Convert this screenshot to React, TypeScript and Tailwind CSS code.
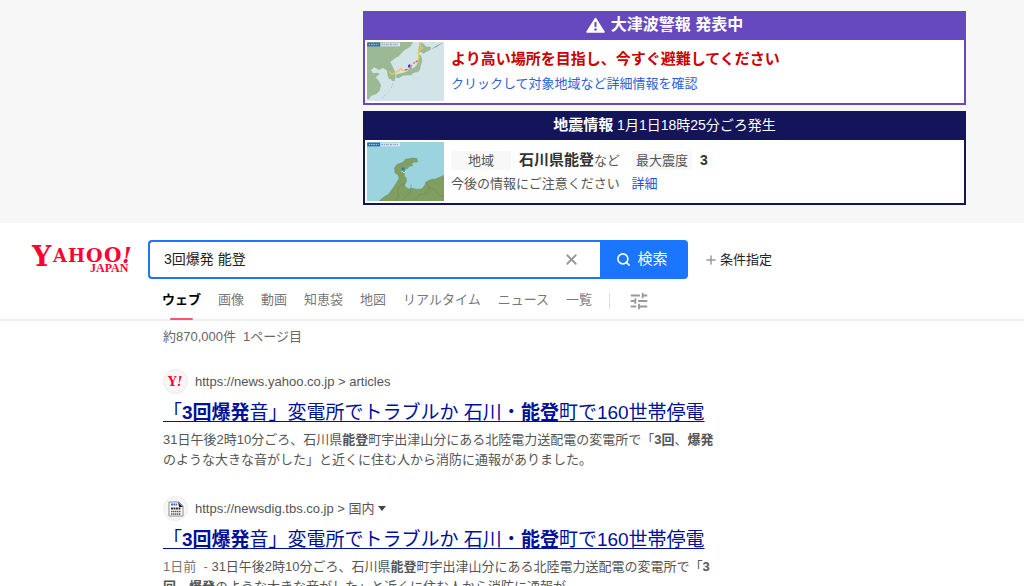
import type { ReactNode } from 'react';
import { MdTune } from 'react-icons/md';
import { Plus, Search, X } from 'lucide-react';
import clsx from 'clsx';

const tabs = ['ウェブ', '画像', '動画', '知恵袋', '地図', 'リアルタイム', 'ニュース', '一覧'];

const YahooLogo = () => (
  <a
    href="#top"
    aria-label="YAHOO! JAPAN"
    className="w-[148px] shrink-0 self-start pl-[31px]"
  >
    <svg width="104" height="36" viewBox="0 0 104 36" fill="#ff0033">
      <g fontFamily="DejaVu Serif, serif" fontWeight="700">
        <text x="1" y="26" fontSize="27">Y</text>
        <text x="22" y="22" fontSize="18">A</text>
        <text x="37" y="22" fontSize="18">H</text>
        <text x="55" y="22" fontSize="19">O</text>
        <text x="73" y="22" fontSize="20">O</text>
        <text x="91" y="23" fontSize="22" fontStyle="italic">!</text>
      </g>
      <text
        x="59"
        y="32"
        fontSize="12"
        fontWeight="700"
        fontFamily="Liberation Serif, serif"
      >
        JAPAN
      </text>
    </svg>
  </a>
);

const MapLabel = () => (
  <g>
    <rect x="1" y="2" width="39" height="11" fill="#1c62a4" />
    <rect x="40" y="2" width="59" height="11" fill="#dfe8f6" />
    <path d="M5 7.500h30" stroke="#9fc0dc" strokeWidth="4" strokeDasharray="5 2" />
    <path d="M43 7.500h52" stroke="#8ea3cf" strokeWidth="4" strokeDasharray="6 2 3 2" />
  </g>
);

const JapanMap = () => (
  <svg
    viewBox="0 0 231 177"
    preserveAspectRatio="none"
    className="h-[59px] w-[77px] shrink-0"
  >
    <rect width="231" height="177" fill="#d2e4e7" />
    <g fill="#9bb995">
      <path d="M0 0h138l-8 14-20 12-14 16-14 8-12 10 6 12 8 16 2 14-8 8-12 1-5-14-2-12-11-7-12 6-14-8-10 8 6 10 14-2 6 4-12 10 10 12 6 12-4 16-10 10-16 6-6 8H0z" />
      <path d="M158 0l10 4 10 10 14 0-2 10-12 5-8 6-8-6-6 4-2-10z" />
      <path d="M153 38l9 2 4 16-5 16-2 12-6 6-13 2-8 8-12 0-16 2-17 1 2-6 18-4 14-5 8-12 4-4 2 8 12-7 6-14z" />
      <path d="M72 95l10 2 4 8-4 13-8-2-6-14zM88 101l13-3 4 5-9 6-8-2z" />
      <path d="M0 138l8 2 2 16-4 16-6-4z" />
    </g>
    <g fill="none" strokeWidth="4" strokeLinejoin="round">
      <path d="M163 4l-4 10 8 4-8 5-6 8 3 10-3 14-3 6" stroke="#eec952" />
      <path d="M66 88l6 7 6 2 8-6 10-5 5-7 4 5 12 2" stroke="#eec952" />
      <path d="M114 84l8-2M144 62l-5 2M151 56l-5 4" stroke="#e2604f" />
      <path d="M134 68l-4 9" stroke="#e98792" />
    </g>
    <path d="M123 70l5-4 3 5-4 7-4-2z" fill="#6a32c8" />
    <path
      d="M78 124l-5 14M67 148l-6 6M56 158l-12 12M194 21l16-8 18-12"
      stroke="#abc5ae"
      strokeWidth="3"
      strokeDasharray="5 5"
    />
    <MapLabel />
  </svg>
);

const NotoMap = () => (
  <svg
    viewBox="0 0 231 177"
    preserveAspectRatio="none"
    className="h-[59px] w-[77px] shrink-0"
  >
    <rect width="231" height="177" fill="#9bd3df" />
    <path
      d="M36 177l14-12 14-8 12-16 12-18 8-14-3-10-9-6-2-14 8-12 18-6 7-9 20-4 15 1 2 11-11 1-7 5 3 6-10 1-4 6-8 2-1 11-2 9 6 8 1 10-6 5 2 10 9 6 14-1 11 3 16-2 9-12 2-8 16-8 13-1 20-9 18-7v95z"
      fill="#7f9e5f"
      stroke="#6e8d67"
    />
    <g fill="none" stroke="#718e57" strokeWidth="2">
      <path d="M117 123l-15 5-10 14 4 20-12 15M133 128l-3 22-24 24" />
      <path d="M178 120l8 17 16 5 12 16 17 6M186 137l-8 18-20 3-14 18" />
    </g>
    <circle cx="108" cy="81" r="5" fill="#2779e2" />
    <path d="M103 88h4M109 92h5M114 88h3" stroke="#cfe7ea" strokeWidth="4" />
    <MapLabel />
  </svg>
);

const WarningIcon = () => (
  <svg width="19" height="16" viewBox="0 0 19 16">
    <path
      d="M9.500 1.500L18 15H1z"
      fill="#fff"
      stroke="#fff"
      strokeWidth="1.500"
      strokeLinejoin="round"
    />
    <path d="M9.500 5v5" stroke="#6649be" strokeWidth="2" />
    <circle cx="9.500" cy="12.500" r="1.200" fill="#6649be" />
  </svg>
);

const YahooMark = () => (
  <svg width="17" height="13" viewBox="0 0 17 13" fill="#ff0033">
    <g fontFamily="DejaVu Serif, serif" fontWeight="700">
      <text x="1" y="11" fontSize="12">Y</text>
      <text x="10" y="11" fontSize="12" fontStyle="italic">!</text>
    </g>
  </svg>
);

const NewsDigMark = () => (
  <svg width="16" height="16" viewBox="0 0 16 16">
    <path d="M1 1h10l4 4v10H1z" fill="#fff" stroke="#8b8b8b" />
    <path d="M10 1l5 5h-4z" fill="#17213c" />
    <path d="M3 3.500h6" stroke="#3c64e8" strokeWidth="2" strokeDasharray="2 .5" />
    <path d="M3 7.500h10" stroke="#333" strokeWidth="2" strokeDasharray="2 .5" />
    <path d="M3 10.500h10M3 13h10" stroke="#555" strokeWidth="1.500" strokeDasharray="1.500 .5" />
  </svg>
);

const Alerts = () => (
  <section className="bg-[#f7f7f7] pt-[11px] pr-[58px] pb-[18px] pl-[363px]">
    <div className="flex max-w-[603px] flex-col gap-[6px]">
      <article className="border-2 border-[#6649be] bg-white">
        <h2 className="flex h-[27px] items-center justify-center gap-[6px] bg-[#6649be] pb-1 text-[16px] font-bold text-white">
          <WarningIcon />
          大津波警報 発表中
        </h2>
        <div className="flex gap-[7px] p-[2px]">
          <JapanMap />
          <div className="pt-[5px]">
            <p className="text-[15px] leading-[24px] font-bold text-[#cc0000]">
              より高い場所を目指し、今すぐ避難してください
            </p>
            <a href="#tsunami" className="block leading-[26px] text-[#2b5fdb]">
              クリックして対象地域など詳細情報を確認
            </a>
          </div>
        </div>
      </article>
      <article className="border-2 border-[#14145a] bg-white">
        <h2 className="h-[27px] bg-[#14145a] text-center text-[14px] leading-[24px] text-white">
          <b className="text-[15px]">地震情報</b> 1月1日18時25分ごろ発生
        </h2>
        <div className="flex gap-[7px] p-[2px]">
          <NotoMap />
          <div className="pt-[6px]">
            <div className="flex h-[24px] items-center">
              <span className="w-[60px] bg-[#f8f8f8] text-center leading-[19px]">
                地域
              </span>
              <span className="ml-2">
                <b className="text-[15px] text-[#333]">石川県能登</b>など
              </span>
              <span className="ml-3 bg-[#f8f8f8] px-1 leading-[19px]">
                最大震度
              </span>
              <b className="ml-2 text-[14px] text-[#333]">3</b>
            </div>
            <p className="leading-[24px]">
              今後の情報にご注意ください{' '}
              <a href="#detail" className="ml-2 text-[#1a54dc]">
                詳細
              </a>
            </p>
          </div>
        </div>
      </article>
    </div>
  </section>
);

const Header = () => (
  <header className="border-b-2 border-[#efefef] pt-[17px]">
    <div className="flex items-center">
      <YahooLogo />
      <form className="flex h-[39px] w-[540px]" onSubmit={(e) => e.preventDefault()}>
        <div className="flex min-w-0 flex-1 items-center rounded-l-[4px] border-2 border-r-0 border-[#1a75ff]">
          <input
            type="text"
            aria-label="検索キーワード"
            defaultValue="3回爆発 能登"
            className="min-w-0 flex-1 px-[14px] text-[14px] text-[#222] outline-none"
          />
          <button type="button" aria-label="クリア" className="mr-5 text-[#999]">
            <X size={17} strokeWidth={2.5} />
          </button>
        </div>
        <button
          type="submit"
          className="flex w-[88px] items-center justify-center gap-[6px] rounded-r-[4px] bg-[#1a75ff] pr-1 text-[15px] text-white"
        >
          <Search size={15} strokeWidth={2.5} />
          検索
        </button>
      </form>
      <button type="button" className="ml-4 flex items-center gap-[2px] text-[#222]">
        <Plus size={14} strokeWidth={2.5} className="text-[#999]" />
        条件指定
      </button>
    </div>
    <nav className="flex h-[40px] items-center pl-[162px]">
      <ul className="flex h-full gap-[17px]">
        {tabs.map((tab, i) => (
          <li key={tab} className="relative h-full">
            <a
              href="#tab"
              className={clsx(
                'leading-[42px]',
                i === 0 ? 'font-bold text-black' : 'text-[#777]'
              )}
            >
              {tab}
            </a>
            {i === 0 && (
              <span className="absolute inset-x-2 -bottom-px h-[2px] rounded-full bg-[#ff5466]" />
            )}
          </li>
        ))}
      </ul>
      <span className="mt-1 ml-[17px] h-4 w-px bg-[#ddd]" />
      <button type="button" aria-label="検索ツール" className="mt-1 ml-[18px] text-[#999]">
        <MdTune size={22} />
      </button>
    </nav>
  </header>
);

type ResultProps = {
  icon: ReactNode;
  url: string;
  menu?: boolean;
  children: ReactNode;
};

const Result = ({ icon, url, menu, children }: ResultProps) => (
  <article>
    <div className="flex h-[25px] items-center gap-[7px]">
      <span className="flex size-[25px] items-center justify-center rounded-full border border-[#ececec] bg-[#f6f6f6]">
        {icon}
      </span>
      <cite className="not-italic">{url}</cite>
      {menu && (
        <button type="button" aria-label="メニュー" className="-ml-1 text-[#444]">
          <svg width="8" height="5" viewBox="0 0 8 5" fill="currentColor">
            <path d="M0 0h8L4 5z" />
          </svg>
        </button>
      )}
    </div>
    <h3 className="pt-[2px] text-[19px] leading-[34px] whitespace-nowrap">
      <a
        href="#result"
        className="text-[#00109c] underline decoration-1 underline-offset-2 [text-decoration-skip-ink:none]"
      >
        「<b>3回爆発</b>音」変電所でトラブルか 石川・<b>能登</b>町で160世帯停電
      </a>
    </h3>
    <p className="leading-[20px]">{children}</p>
  </article>
);

const App = () => {
  return (
    <div
      lang="ja"
      className="h-screen overflow-hidden bg-white font-['Liberation_Sans','Noto_Sans_CJK_JP',sans-serif] text-[13px] text-[#555]"
    >
      <Alerts />
      <Header />
      <main className="max-w-[719px] pt-[6px] pl-[163px]">
        <p className="mb-[22px] leading-[20px] text-[#666]">
          約870,000件<span className="ml-[7px]">1ページ目</span>
        </p>
        <div className="flex flex-col gap-[26px]">
          <Result icon={<YahooMark />} url="https://news.yahoo.co.jp > articles">
            31日午後2時10分ごろ、石川県<b>能登</b>町宇出津山分にある北陸電力送配電の変電所で「
            <b>3回</b>、<b>爆発</b>
            のような大きな音がした」と近くに住む人から消防に通報がありました。
          </Result>
          <Result icon={<NewsDigMark />} url="https://newsdig.tbs.co.jp > 国内" menu>
            <span className="text-[#777]">1日前 &nbsp;- </span>
            31日午後2時10分ごろ、石川県<b>能登</b>町宇出津山分にある北陸電力送配電の変電所で「
            <b>3回</b>、<b>爆発</b>
            のような大きな音がした」と近くに住む人から消防に通報が
          </Result>
        </div>
      </main>
    </div>
  );
};

export default App;
